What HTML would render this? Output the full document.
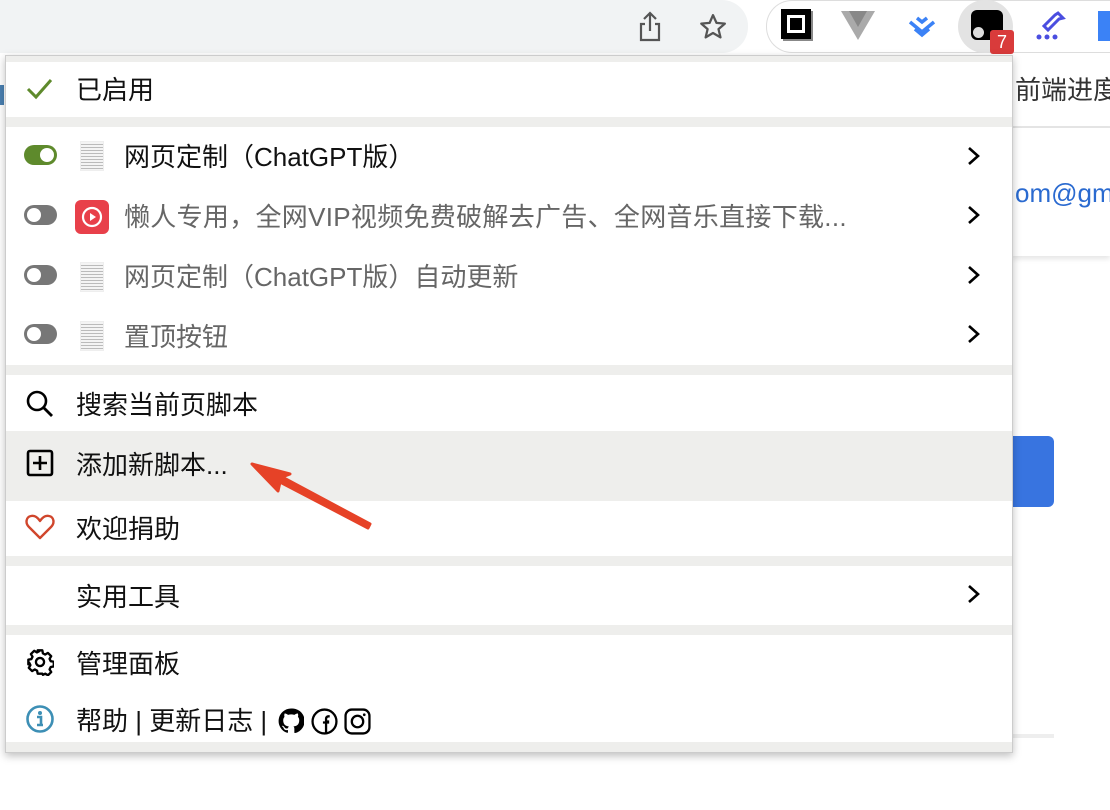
<!DOCTYPE html>
<html><head><meta charset="utf-8"><style>
*{margin:0;padding:0;box-sizing:border-box}
body{width:1110px;height:810px;background:#fff;position:relative;overflow:hidden;font-family:"Liberation Sans","Noto Sans CJK SC",sans-serif;color:#111}
.abs{position:absolute}
.t{position:absolute;font-size:26px;line-height:30px;white-space:nowrap}
.g{color:#666}
.sep{position:absolute;left:6px;width:1006px;height:10px;background:#eeeeec}
.chev{position:absolute;left:964px}
.tog{position:absolute;left:24px;width:33px;height:20px;border-radius:10px;background:#777}
.tog::after{content:"";position:absolute;top:3px;left:3px;width:14px;height:14px;border-radius:50%;background:#fff}
.tog.on{background:#5e8a2c}.tog.on::after{left:16px}
.doc{position:absolute;left:80px;width:24px;height:30px;background:repeating-linear-gradient(#f4f4f4 0 2px,#bbb 2px 3px);border:1px solid #eee}
</style></head><body>
<div class="abs" style="left:0;top:0;width:748px;height:53px;background:#f1f3f4;border-radius:0 26px 26px 0"></div>
<div class="abs" style="left:766px;top:0;width:344px;height:53px;background:#fff;border:1px solid #ddd;border-right:none;border-radius:26px 0 0 26px"></div>
<svg class="abs" style="left:636px;top:10px" width="28" height="34" viewBox="0 0 28 34"><path d="M14 3v18M8 9l6-6 6 6M9 14H5v16h18V14h-4" fill="none" stroke="#555" stroke-width="2.2"/></svg>
<svg class="abs" style="left:698px;top:12px" width="30" height="30" viewBox="0 0 24 24"><path d="M12 2.5l2.8 6.2 6.7.6-5.1 4.4 1.6 6.6L12 16.8l-5.9 3.5 1.6-6.6-5.1-4.4 6.7-.6z" fill="none" stroke="#555" stroke-width="1.8" stroke-linejoin="round"/></svg>
<div class="abs" style="left:781px;top:9px;width:30px;height:30px;background:#000;box-shadow:2px 2px 0 #888"></div>
<div class="abs" style="left:787px;top:15px;width:18px;height:18px;background:#fff"></div>
<div class="abs" style="left:790px;top:18px;width:12px;height:12px;background:#000"></div>
<svg class="abs" style="left:841px;top:11px" width="34" height="30" viewBox="0 0 34 30"><path d="M0 0h34L17 29z" fill="#aaa"/><path d="M8 0h18L17 16z" fill="#888"/></svg>
<svg class="abs" style="left:905px;top:12px" width="34" height="28" viewBox="0 0 34 28"><path d="M5 10l12 10 12-10M10 17l7 6 7-6M12 6l5 4 5-4" fill="none" stroke="#3b82f6" stroke-width="3.5"/></svg>
<div class="abs" style="left:958px;top:0;width:55px;height:53px;background:#e3e3e3;border-radius:27px"></div>
<div class="abs" style="left:971px;top:10px;width:32px;height:30px;background:#000;border-radius:6px"></div>
<div class="abs" style="left:973px;top:27px;width:11px;height:11px;background:#ddd;border-radius:50%"></div>
<div class="abs" style="left:990px;top:30px;width:24px;height:24px;background:#d93b3b;border-radius:3px;color:#fff;font-size:18px;line-height:24px;text-align:center">7</div>
<svg class="abs" style="left:1034px;top:10px" width="32" height="32" viewBox="0 0 32 32"><path d="M24 3l5 5-4 1-11 11-4-4L21 5z" fill="none" stroke="#4a4ee0" stroke-width="3"/><circle cx="5" cy="27" r="2.5" fill="#4a4ee0"/><circle cx="13" cy="27" r="2.5" fill="#4a4ee0"/><circle cx="21" cy="27" r="2.5" fill="#4a4ee0"/></svg>
<div class="abs" style="left:1098px;top:11px;width:12px;height:30px;background:#3b82f6"></div>
<div class="t" style="left:1015px;top:75px;color:#333">前端进度</div>
<div class="abs" style="left:1012px;top:126px;width:98px;height:2px;background:#e5e5e5"></div>
<div class="abs" style="left:1012px;top:128px;width:98px;height:128px;background:#fff;box-shadow:0 3px 5px rgba(0,0,0,.1)"></div>
<div class="t" style="left:1015px;top:178px;color:#2a6ad0;font-size:26px">om@gmail</div>
<div class="abs" style="left:1000px;top:436px;width:54px;height:71px;background:#3874e0;border-radius:6px"></div>
<div class="abs" style="left:1012px;top:734px;width:42px;height:4px;background:#eee"></div>
<div class="abs" style="left:0;top:85px;width:4px;height:20px;background:#4a7fb0"></div>
<div class="abs" style="left:5px;top:55px;width:1008px;height:698px;background:#fff;border:1px solid #ccc;box-shadow:0 3px 8px rgba(0,0,0,.25)"></div>
<div class="sep" style="top:56px;height:6px"></div>
<div class="sep" style="top:117px"></div>
<div class="sep" style="top:365px"></div>
<div class="abs" style="left:6px;top:431px;width:1006px;height:70px;background:#eeeeec"></div>
<div class="sep" style="top:556px"></div>
<div class="sep" style="top:625px"></div>
<div class="sep" style="top:742px"></div>

<svg class="abs" style="left:25px;top:76px" width="28" height="26" viewBox="0 0 28 26"><path d="M3 13l8 8L26 4" fill="none" stroke="#5e8a2c" stroke-width="3"/></svg>
<div class="t" style="left:76px;top:75px">已启用</div>

<div class="tog on" style="top:145px"></div><div class="doc" style="top:141px"></div>
<div class="t" style="left:124px;top:142px">网页定制（ChatGPT版）</div>
<div class="tog" style="top:205px"></div>
<div class="abs" style="left:75px;top:200px;width:34px;height:34px;background:#e8404a;border-radius:6px"></div>
<svg class="abs" style="left:79px;top:204px" width="26" height="26" viewBox="0 0 26 26"><circle cx="13" cy="13" r="9" fill="none" stroke="#fff" stroke-width="2.2"/><path d="M11 9l6 4-6 4z" fill="#fff"/></svg>
<div class="t g" style="left:124px;top:202px;letter-spacing:0.3px">懒人专用，全网VIP视频免费破解去广告、全网音乐直接下载...</div>
<div class="tog" style="top:265px"></div><div class="doc" style="top:262px"></div>
<div class="t g" style="left:124px;top:262px">网页定制（ChatGPT版）自动更新</div>
<div class="tog" style="top:324px"></div><div class="doc" style="top:321px"></div>
<div class="t g" style="left:124px;top:322px">置顶按钮</div>
<svg class="chev" style="top:145px" width="20" height="22" viewBox="0 0 20 22"><path d="M5 3l9 8-9 8" fill="none" stroke="#000" stroke-width="2.6"/></svg>
<svg class="chev" style="top:204px" width="20" height="22" viewBox="0 0 20 22"><path d="M5 3l9 8-9 8" fill="none" stroke="#000" stroke-width="2.6"/></svg>
<svg class="chev" style="top:264px" width="20" height="22" viewBox="0 0 20 22"><path d="M5 3l9 8-9 8" fill="none" stroke="#000" stroke-width="2.6"/></svg>
<svg class="chev" style="top:323px" width="20" height="22" viewBox="0 0 20 22"><path d="M5 3l9 8-9 8" fill="none" stroke="#000" stroke-width="2.6"/></svg>
<svg class="chev" style="top:583px" width="20" height="22" viewBox="0 0 20 22"><path d="M5 3l9 8-9 8" fill="none" stroke="#000" stroke-width="2.6"/></svg>

<svg class="abs" style="left:25px;top:389px" width="30" height="30" viewBox="0 0 30 30"><circle cx="12" cy="12" r="9" fill="none" stroke="#000" stroke-width="2.6"/><path d="M19 19l8 8" stroke="#000" stroke-width="2.8"/></svg>
<div class="t" style="left:76px;top:390px">搜索当前页脚本</div>
<svg class="abs" style="left:26px;top:449px" width="28" height="28" viewBox="0 0 28 28"><rect x="2" y="2" width="24" height="24" rx="2" fill="none" stroke="#000" stroke-width="2.6"/><path d="M14 7v14M7 14h14" stroke="#000" stroke-width="2.6"/></svg>
<div class="t" style="left:76px;top:450px">添加新脚本...</div>
<svg class="abs" style="left:248px;top:460px" width="126" height="70" viewBox="0 0 126 70"><path d="M4 4l38 10-8 3 88 47-2 4-88-46-2 9z" fill="#e64227" stroke="#e64227" stroke-width="3" stroke-linejoin="round"/></svg>
<svg class="abs" style="left:25px;top:513px" width="30" height="28" viewBox="0 0 30 28"><path d="M15 25L4 14C0 10 1 4 6 3c4-1 7 2 9 5 2-3 5-6 9-5 5 1 6 7 2 11z" fill="none" stroke="#d0462c" stroke-width="2.4" stroke-linejoin="round"/></svg>
<div class="t" style="left:76px;top:514px">欢迎捐助</div>
<div class="t" style="left:76px;top:582px">实用工具</div>
<svg class="abs" style="left:26px;top:648px" width="28" height="28" viewBox="0 0 24 24"><path d="M12 8.5a3.5 3.5 0 100 7 3.5 3.5 0 000-7z" fill="none" stroke="#000" stroke-width="2"/><path d="M10 2h4l.5 2.6 2 1 2.3-1.4 2.8 2.8-1.4 2.3 1 2 2.6.5v4l-2.6.5-1 2 1.4 2.3-2.8 2.8-2.3-1.4-2 1L14 22h-4l-.5-2.6-2-1-2.3 1.4-2.8-2.8 1.4-2.3-1-2L2 14v-4l2.6-.5 1-2-1.4-2.3 2.8-2.8 2.3 1.4 2-1z" fill="none" stroke="#000" stroke-width="2" stroke-linejoin="round"/></svg>
<div class="t" style="left:76px;top:649px">管理面板</div>
<svg class="abs" style="left:25px;top:704px" width="30" height="30" viewBox="0 0 30 30"><circle cx="15" cy="15" r="12.5" fill="none" stroke="#3d8fb5" stroke-width="2.6"/><circle cx="15" cy="9" r="2" fill="#3d8fb5"/><path d="M12 13h4v8h2M12 21h6" fill="none" stroke="#3d8fb5" stroke-width="2.6"/></svg>
<div class="t" style="left:76px;top:706px">帮助 | 更新日志 |</div>
<svg class="abs" style="left:278px;top:708px" width="26" height="26" viewBox="0 0 24 24"><path d="M12 .5a11.5 11.5 0 00-3.6 22.4c.6.1.8-.2.8-.6v-2c-3.2.7-3.900-1.5-3.9-1.5-.5-1.3-1.3-1.7-1.3-1.7-1-.7.1-.7.1-.7 1.2.1 1.8 1.2 1.8 1.2 1 1.8 2.8 1.3 3.4 1 .1-.8.4-1.3.8-1.6-2.6-.3-5.3-1.3-5.3-5.7 0-1.3.5-2.300 1.2-3.1-.1-.3-.5-1.5.1-3.1 0 0 1-.3 3.2 1.2a11 11 0 015.8 0c2.2-1.5 3.2-1.2 3.2-1.2.6 1.6.2 2.8.1 3.1.8.8 1.2 1.8 1.2 3.1 0 4.4-2.7 5.4-5.3 5.7.4.4.8 1.1.8 2.2v3.3c0 .3.2.7.8.6A11.5 11.5 0 0012 .5z" fill="#000"/></svg>
<svg class="abs" style="left:311px;top:708px" width="27" height="27" viewBox="0 0 26 26"><circle cx="13" cy="13" r="11.5" fill="none" stroke="#000" stroke-width="2.2"/><path d="M14.5 24V13h3M14.5 13v-2.5c0-1.5.7-2.5 2.5-2.5h1M11.5 14h6" fill="none" stroke="#000" stroke-width="2.2"/></svg>
<svg class="abs" style="left:344px;top:708px" width="27" height="27" viewBox="0 0 26 26"><rect x="1.5" y="1.5" width="23" height="23" rx="6" fill="none" stroke="#000" stroke-width="2.2"/><circle cx="13" cy="13" r="5.5" fill="none" stroke="#000" stroke-width="2.2"/><circle cx="19.5" cy="6.5" r="1.3" fill="#000"/></svg>
</body></html>
